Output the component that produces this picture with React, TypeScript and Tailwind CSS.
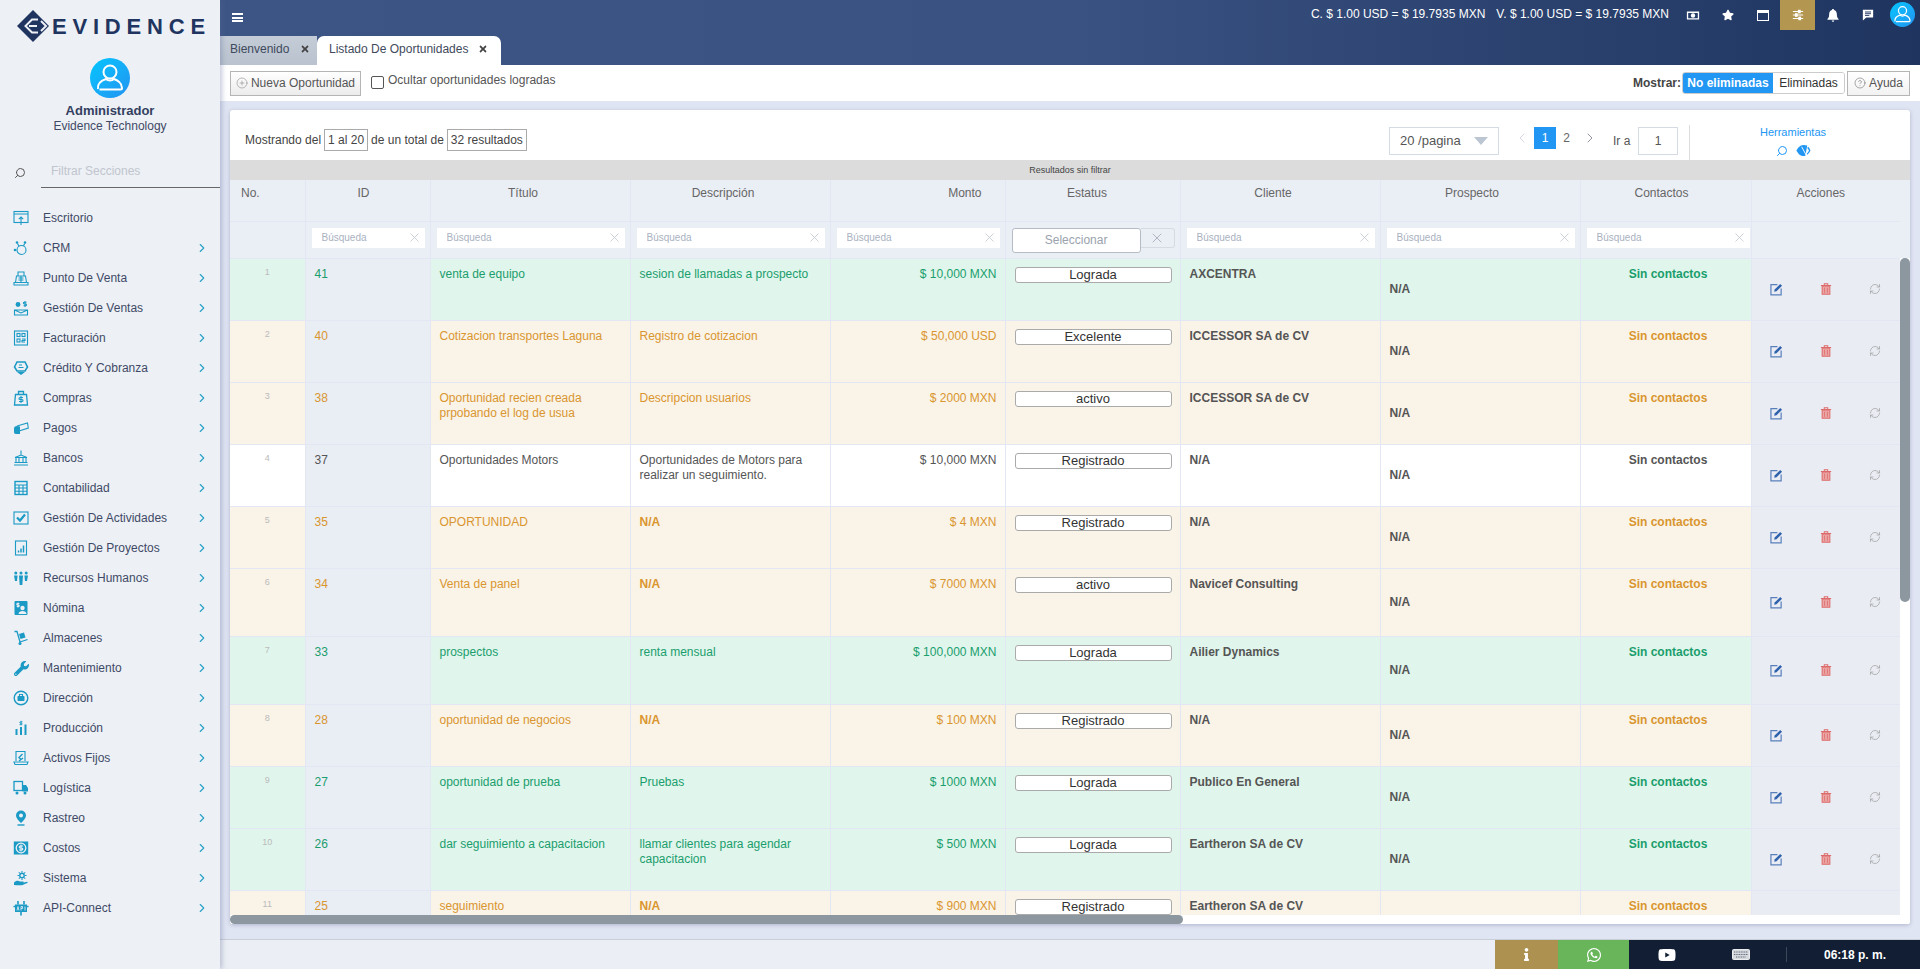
import { ChevronLeft, ChevronRight, CircleHelp, CirclePlus, RefreshCw, Search, X } from "lucide-react";
import type { ReactNode } from "react";
import { FaInfo, FaStar, FaTimes, FaWhatsapp, FaWrench, FaYoutube } from "react-icons/fa";

type Tone = "green" | "orange" | "white";

type Row = {
  no: number;
  id: number;
  title: string;
  desc: string;
  amount: string;
  status: string;
  client: string;
  tone: Tone;
  tall?: boolean;
};

const rows: Row[] = [
  { no: 1, id: 41, title: "venta de equipo", desc: "sesion de llamadas a prospecto", amount: "$ 10,000 MXN", status: "Lograda", client: "AXCENTRA", tone: "green" },
  { no: 2, id: 40, title: "Cotizacion transportes Laguna", desc: "Registro de cotizacion", amount: "$ 50,000 USD", status: "Excelente", client: "ICCESSOR SA de CV", tone: "orange" },
  { no: 3, id: 38, title: "Oportunidad recien creada prpobando el log de usua", desc: "Descripcion usuarios", amount: "$ 2000 MXN", status: "activo", client: "ICCESSOR SA de CV", tone: "orange" },
  { no: 4, id: 37, title: "Oportunidades Motors", desc: "Oportunidades de Motors para realizar un seguimiento.", amount: "$ 10,000 MXN", status: "Registrado", client: "N/A", tone: "white" },
  { no: 5, id: 35, title: "OPORTUNIDAD", desc: "N/A", amount: "$ 4 MXN", status: "Registrado", client: "N/A", tone: "orange" },
  { no: 6, id: 34, title: "Venta de panel", desc: "N/A", amount: "$ 7000 MXN", status: "activo", client: "Navicef Consulting", tone: "orange", tall: true },
  { no: 7, id: 33, title: "prospectos", desc: "renta mensual", amount: "$ 100,000 MXN", status: "Lograda", client: "Ailier Dynamics", tone: "green", tall: true },
  { no: 8, id: 28, title: "oportunidad de negocios", desc: "N/A", amount: "$ 100 MXN", status: "Registrado", client: "N/A", tone: "orange" },
  { no: 9, id: 27, title: "oportunidad de prueba", desc: "Pruebas", amount: "$ 1000 MXN", status: "Lograda", client: "Publico En General", tone: "green" },
  { no: 10, id: 26, title: "dar seguimiento a capacitacion", desc: "llamar clientes para agendar capacitacion", amount: "$ 500 MXN", status: "Lograda", client: "Eartheron SA de CV", tone: "green" },
  { no: 11, id: 25, title: "seguimiento", desc: "N/A", amount: "$ 900 MXN", status: "Registrado", client: "Eartheron SA de CV", tone: "orange" },
];

const toneCell: Record<Tone, string> = {
  green: "bg-[#e0f5ec] text-[#1a9e6c]",
  orange: "bg-[#faf3e8] text-[#d9962f]",
  white: "bg-white text-[#555]",
};

const toneText: Record<Tone, string> = {
  green: "text-[#1a9e6c]",
  orange: "text-[#d9962f]",
  white: "text-[#555]",
};

const Ico = ({ children }: { children: ReactNode }) => (
  <svg viewBox="0 0 16 16" className="w-[16px] h-[16px] text-[#1b9ac5]" fill="none" stroke="currentColor" strokeWidth="1.1">
    {children}
  </svg>
);

const solid = { fill: "currentColor", stroke: "none" };

const menu: { label: string; arrow?: boolean; icon: ReactNode }[] = [
  { label: "Escritorio", icon: <Ico><rect x="1" y="1.5" width="14" height="11" /><path d="M1 4h14M8 15V7M5.8 9.2 8 7l2.2 2.2" /></Ico> },
  { label: "CRM", arrow: true, icon: <Ico><circle cx="8.5" cy="10" r="4.5" /><circle cx="4" cy="2.5" r="1.3" {...solid} /><circle cx="12" cy="2.5" r="1.3" {...solid} /><circle cx="2" cy="10" r="1.3" {...solid} /><path d="M4.5 3.5l1.6 3M11.6 3.5 10.5 6" /></Ico> },
  { label: "Punto De Venta", arrow: true, icon: <Ico><path d="M1 15h14v-2.5H1zM2.5 12.5l1-6.5h9l1 6.5M5 6V2h6v4M5.5 8h5M5.5 10h5M8 6v6" /></Ico> },
  { label: "Gestión De Ventas", arrow: true, icon: <Ico><circle cx="5" cy="4.5" r="2.4" {...solid} /><path d="M1.5 10h13v5h-13zM1.5 10l6.5 3 6.5-3" /><path d="M12 1v6M13.5 2.2h-2.2a.9.9 0 0 0 0 1.8h1.3a.9.9 0 0 1 0 1.8h-2.1" /></Ico> },
  { label: "Facturación", arrow: true, icon: <Ico><rect x="1.5" y="1" width="13" height="14" /><rect x="4" y="3.5" width="3" height="3" /><rect x="9" y="3.5" width="3" height="3" /><rect x="4" y="9" width="3" height="3" /><path d="M9 9h3v1.5H9V12h3" /></Ico> },
  { label: "Crédito Y Cobranza", arrow: true, icon: <Ico><path d="M8 15 4 12h8z" {...solid} /><path d="M1.5 7 4 2h8l2.5 5L12 11H4z" strokeWidth="1.6" /><path d="M5.5 7.5h5M6 5h3" /></Ico> },
  { label: "Compras", arrow: true, icon: <Ico><path d="M2.5 4.5h11L14.5 15h-13zM5.5 4.5V1.5h5v3" strokeWidth="1.3" /><path d="M8 6v7M10 7.5H7a1 1 0 0 0 0 2h2a1 1 0 0 1 0 2H6" /></Ico> },
  { label: "Pagos", arrow: true, icon: <Ico><path d="M4 6 14.5 3l.8 5L6 11" /><path d="M1 8.5C1 7 2 6 4 6l3 .5V14H3c-1.500 0-2-1-2-2z" {...solid} /></Ico> },
  { label: "Bancos", arrow: true, icon: <Ico><path d="M1 15h14M2 7.500h12M3 7.500v5h3v-5M10 7.500v5h3v-5M1.500 12.500h13M2 7.500 8 5l6 2.500M8 .5v4" /></Ico> },
  { label: "Contabilidad", arrow: true, icon: <Ico><rect x="2" y="1.500" width="12" height="13" strokeWidth="1.4" /><path d="M2 5h12M2 8h12M2 11.200h12M6 5v9.500M10 5v9.500" /></Ico> },
  { label: "Gestión De Actividades", arrow: true, icon: <Ico><rect x="1" y="2" width="14" height="12" /><path d="m4 7.500 3 3 5-6" strokeWidth="2.200" /></Ico> },
  { label: "Gestión De Proyectos", arrow: true, icon: <Ico><rect x="2.500" y="1" width="11" height="14" /><path d="M5.500 12.500v-2M8 12.500v-4M10.500 12.500v-7" strokeWidth="1.500" /></Ico> },
  { label: "Recursos Humanos", arrow: true, icon: <Ico><g {...solid}><circle cx="2.800" cy="3" r="1.500" /><circle cx="8" cy="3" r="1.500" /><circle cx="13.200" cy="3" r="1.500" /><path d="M1 5.500h3.600L4 11H2zM6 5.500h4L9.300 15H6.700zM11.400 5.500H15L14 11h-2z" /></g></Ico> },
  { label: "Nómina", arrow: true, icon: <Ico><rect x="1.500" y="1" width="13" height="14" rx="1" {...solid} /><circle cx="9.500" cy="8" r="2.200" fill="#edf0f5" stroke="none" /><path d="M5.500 14c0-2 2-3 4-3s4 1 4 3z" fill="#edf0f5" stroke="none" /><path d="M5 2.500v5M6.300 3.500H4.500a.7.7 0 0 0 0 1.500h1a.7.7 0 0 1 0 1.500H3.700" stroke="#edf0f5" /></Ico> },
  { label: "Almacenes", arrow: true, icon: <Ico><path d="M1.500 1.500H4l3 10.500 7.500-2.500" strokeWidth="1.300" /><circle cx="7" cy="13.500" r="1.500" {...solid} /><path d="m6 4 5-1.500 1.500 5-5 1.500z" {...solid} /></Ico> },
  { label: "Mantenimiento", arrow: true, icon: <FaWrench className="w-[15px] h-[15px] text-[#1b9ac5]" /> },
  { label: "Dirección", arrow: true, icon: <Ico><circle cx="8" cy="8" r="6.800" strokeWidth="1.400" /><rect x="4.500" y="6" width="7" height="5" rx=".8" {...solid} /><path d="M6.500 6V4.500h3V6" /></Ico> },
  { label: "Producción", arrow: true, icon: <Ico><path d="M3.500 15V9M8 15V7M12.500 15V4.500" strokeWidth="2" /><path d="M8 .8v4.500M9.500 1.800H7.500a.7.7 0 0 0 0 1.400h1a.7.7 0 0 1 0 1.400H6.500" strokeWidth=".9" /></Ico> },
  { label: "Activos Fijos", arrow: true, icon: <Ico><path d="M3 11V1.500h9V11M1 12h14l-1 2.500H2z" /><path d="M9.500 4 6 7.500 8 9.500M6 11l4-3" strokeWidth="1.400" /></Ico> },
  { label: "Logística", arrow: true, icon: <Ico><rect x="1" y="1.500" width="8.500" height="9" strokeWidth="1.300" /><path d="M9.500 5H13l2 3v3.500H9.500z" {...solid} /><circle cx="4" cy="13" r="1.500" {...solid} /><circle cx="12" cy="13" r="1.500" {...solid} /></Ico> },
  { label: "Rastreo", arrow: true, icon: <Ico><path d="M8 13C5 10 3 7.800 3 5.500a5 5 0 0 1 10 0C13 7.800 11 10 8 13z" {...solid} /><circle cx="8" cy="5.500" r="2" fill="#edf0f5" stroke="none" /><path d="M4.500 15h7" strokeWidth="1.400" /></Ico> },
  { label: "Costos", arrow: true, icon: <Ico><rect x=".8" y="1.500" width="14.400" height="13" {...solid} /><circle cx="8" cy="8" r="4.800" stroke="#edf0f5" strokeWidth="1.300" /><path d="M8 4.500v7M10 6H7.200a1 1 0 0 0 0 2h1.600a1 1 0 0 1 0 2H6" stroke="#edf0f5" /></Ico> },
  { label: "Sistema", arrow: true, icon: <Ico><path d="M1 12.500c2-2 4-2 6-1h3c1 0 1 1.200 0 1.200l4-1c.8 0 1 .8.300 1.200L9 15.200H3.500L1 15z" {...solid} /><circle cx="9" cy="5.500" r="2.200" strokeWidth="1.400" /><path d="M9 1v1.500M9 8.500V10M4.500 5.500H6M12 5.500h1.500M5.800 2.300l1 1M12.200 2.300l-1 1M5.800 8.700l1-1M12.200 8.700l-1-1" /></Ico> },
  { label: "API-Connect", arrow: true, icon: <Ico><path d="M2 4.500h12V12H2z" {...solid} /><path d="M5 1v3.500M11 1v3.500M8 12v3.500M.5 6.500h15" strokeWidth="1.600" /><path d="M4 10.500 5 6.500l1 4M8 10.500v-4h1.500v2H8M12 6.500v4" stroke="#edf0f5" strokeWidth=".8" /></Ico> },
];

const Avatar = ({ size }: { size: string }) => (
  <div className={`${size} rounded-full bg-gradient-to-br from-[#00c6ff] to-[#2093f0] flex items-center justify-center`}>
    <svg viewBox="0 0 40 40" className="w-full h-full" fill="none" stroke="white" strokeWidth="2">
      <circle cx="20" cy="14" r="6.500" />
      <path d="M8 31c-1-6 5-9 8-10 2 2 6 2 8 0 3 1 8 4 8 9 0 1-1 1.500-1.500 1.500H9.500" />
    </svg>
  </div>
);

const Logo = () => (
  <div className="flex items-center h-[32px] ml-[17px] mt-[10px]">
    <svg viewBox="0 0 32 32" className="w-[32px] h-[32px] text-[#1f3560]" fill="currentColor">
      <path d="M16 0 32 16 16 32 0 16z" />
      <path d="M21 9.500h-6L8.500 16l6.500 6.500h6M12 16h8M24 11l5 5-5 5" fill="none" stroke="#edf0f5" strokeWidth="2" />
    </svg>
    <span className="ml-[3px] text-[22px] font-bold tracking-[5.8px] text-[#1f3560]">EVIDENCE</span>
  </div>
);

const Sidebar = () => (
  <aside className="w-[220px] shrink-0 h-full bg-[#edf0f5] relative z-10 shadow-[2px_0_5px_rgba(90,100,150,0.35)] flex flex-col">
    <Logo />
    <div className="flex flex-col items-center mt-[16px]">
      <Avatar size="w-[40px] h-[40px]" />
      <p className="mt-[4px] text-[13px] leading-[18px] font-bold text-[#33405f]">Administrador</p>
      <p className="-mt-[1px] text-[12px] leading-[15px] text-[#3f4a66]">Evidence Technology</p>
    </div>
    <div className="flex items-center mt-[26px] h-[28px]">
      <Search className="w-[12px] h-[12px] ml-[14px] mb-[3px] text-[#555] -scale-x-100" />
      <div className="ml-[15px] flex-1 h-[28px] border-b border-[#666] pl-[10px] text-[12px] leading-[23px] text-[#c0c5ce]">
        Filtrar Secciones
      </div>
    </div>
    <nav className="mt-[15px]">
      {menu.map((item) => (
        <div key={item.label} className="flex items-center h-[30px] pl-[13px] pr-[11px] text-[12px] text-[#3f4a66]">
          <span className="w-[16px] flex justify-center">{item.icon}</span>
          <span className="ml-[14px] flex-1">{item.label}</span>
          {item.arrow && <ChevronRight className="w-[14px] h-[14px] text-[#2ba3c8]" />}
        </div>
      ))}
    </nav>
  </aside>
);

const TopIcon = ({ children, className = "" }: { children: ReactNode; className?: string }) => (
  <div className={`w-[35px] h-[30px] flex items-center justify-center text-white ${className}`}>{children}</div>
);

const TopBar = () => (
  <header className="h-[65px] shrink-0 bg-gradient-to-r from-[#3d5585] via-[#3a5282] to-[#1f3560]">
    <div className="flex items-start h-[36px] pl-[12px] pr-[5px]">
      <div className="mt-[13px] w-[11px] h-[9px] border-y-2 border-white relative">
        <div className="absolute left-0 right-0 top-[1.5px] h-[2px] bg-white" />
      </div>
      <span className="ml-auto mt-[7px] text-[12px] leading-[15px] text-white">C. $ 1.00 USD = $ 19.7935 MXN</span>
      <span className="ml-[11px] mr-[6px] mt-[7px] text-[12px] leading-[15px] text-white">V. $ 1.00 USD = $ 19.7935 MXN</span>
      <TopIcon>
        <svg viewBox="0 0 16 12" className="w-[14px] h-[11px]" fill="currentColor">
          <path fillRule="evenodd" d="M1 1.500h14v9H1zM2.500 3v6h11V3z" />
          <circle cx="8" cy="6" r="2.500" />
        </svg>
      </TopIcon>
      <TopIcon><FaStar className="w-[12px] h-[12px]" /></TopIcon>
      <TopIcon>
        <div className="w-[12px] h-[11px] border border-white border-t-[3px]" />
      </TopIcon>
      <TopIcon className="bg-[#b3964f]">
        <svg viewBox="0 0 14 14" className="w-[12px] h-[12px]" stroke="currentColor" strokeWidth="1.200" fill="white">
          <path d="M1 3h12M1 7h12M1 11h12" />
          <rect x="7.500" y="1.500" width="2" height="3" />
          <rect x="4" y="5.500" width="2" height="3" />
          <rect x="8" y="9.500" width="2" height="3" />
        </svg>
      </TopIcon>
      <TopIcon>
        <svg viewBox="0 0 14 15" className="w-[12px] h-[13px]" fill="currentColor">
          <path d="M7 0c.8 0 1.200.5 1.200 1.200C10.300 1.800 11.500 3.500 11.500 6c0 3 .8 4.300 2 5.500v1H.5v-1c1.200-1.200 2-2.500 2-5.500 0-2.500 1.200-4.200 3.300-4.800C5.800.5 6.200 0 7 0zM5.500 13.200h3a1.500 1.500 0 0 1-3 0z" />
        </svg>
      </TopIcon>
      <TopIcon>
        <svg viewBox="0 0 14 14" className="w-[12px] h-[12px]">
          <path fill="white" d="M1 1h12v9H5l-4 3.500z" />
          <path stroke="#253a66" strokeWidth="1.100" d="M3.500 3.500h7M3.500 5.500h7M3.500 7.500h5" />
        </svg>
      </TopIcon>
      <div className="ml-[5px] mt-[2px]"><Avatar size="w-[25px] h-[25px]" /></div>
    </div>
    <div className="flex items-end h-[29px] text-[12px]">
      <div className="w-[97px] h-[29px] flex items-center pl-[10px] pb-[3px] bg-gradient-to-b from-[#c4ccd7] to-[#b9c2ce] text-[#3f4a5c]">
        Bienvenido
        <FaTimes className="ml-[11px] w-[10px] h-[10px] text-[#444]" />
      </div>
      <div className="w-[184px] h-[29px] flex items-center pl-[12px] pb-[3px] bg-white rounded-t-[7px] text-[#3f4a5c]">
        Listado De Oportunidades
        <FaTimes className="ml-[10px] w-[10px] h-[10px] text-[#444]" />
      </div>
    </div>
  </header>
);

const Toolbar = () => (
  <div className="h-[36px] shrink-0 bg-white flex items-center pl-[10px] pr-[10px] text-[12px] text-[#555]">
    <button type="button" className="w-[131px] h-[25px] flex items-center justify-center gap-[3px] border border-[#b5b5b5] bg-gradient-to-b from-white to-[#ececec] text-[#555]">
      <CirclePlus className="w-[12px] h-[12px] text-[#777]" strokeWidth={1} />
      Nueva Oportunidad
    </button>
    <span className="ml-[10px] mb-[1px] w-[13px] h-[13px] border border-[#555] rounded-[2px]" />
    <span className="ml-[4px] mb-[6px]">Ocultar oportunidades logradas</span>
    <span className="ml-auto font-bold text-[#444]">Mostrar:</span>
    <div className="flex h-[22px] ml-[1px] border border-[#ccc] rounded-[3px] overflow-hidden">
      <span className="w-[90px] bg-[#2196f3] text-white font-bold flex items-center justify-center">No eliminadas</span>
      <span className="w-[71px] bg-white text-[#333] flex items-center justify-center">Eliminadas</span>
    </div>
    <button type="button" className="ml-[2px] w-[63px] h-[25px] flex items-center justify-center gap-[3px] border border-[#b5b5b5] bg-gradient-to-b from-white to-[#f2f2f2] text-[#555]">
      <CircleHelp className="w-[12px] h-[12px]" strokeWidth={1} />
      Ayuda
    </button>
  </div>
);

const CardHeader = () => (
  <div className="h-[50px] flex items-start text-[12px] text-[#444]">
    <div className="flex items-center gap-[3px] ml-[15px] mt-[19px] h-[22px]">
      <span>Mostrando del</span>
      <span className="h-[22px] px-[3px] flex items-center border border-[#aaa]">1 al 20</span>
      <span>de un total de</span>
      <span className="h-[22px] px-[3px] flex items-center border border-[#aaa]">32 resultados</span>
    </div>
    <div className="ml-auto mt-[17px] w-[110px] h-[28px] border border-[#d5dbe3] flex items-center justify-between pl-[10px] pr-[10px] text-[13px] text-[#555]">
      20 /pagina
      <span className="w-0 h-0 border-x-[7px] border-x-transparent border-t-[8px] border-t-[#bcc6d3]" />
    </div>
    <ChevronLeft className="ml-[15px] mt-[20px] w-[16px] h-[16px] text-[#ccd]" strokeWidth={1.200} />
    <span className="ml-[4px] mt-[17px] w-[22px] h-[22px] bg-[#2196f3] text-white flex items-center justify-center">1</span>
    <span className="w-[21px] mt-[17px] h-[22px] flex items-center justify-center text-[#666]">2</span>
    <ChevronRight className="ml-[5px] mt-[20px] w-[16px] h-[16px] text-[#778]" strokeWidth={1.200} />
    <span className="ml-[15px] mt-[22px] w-[25px] text-[#555]">Ir a</span>
    <span className="mt-[17px] w-[40px] h-[28px] border border-[#d5dbe3] flex items-center justify-center text-[#555]">1</span>
    <div className="ml-[11px] mt-[15px] w-[221px] h-[35px] border-l border-[#ddd] flex flex-col items-center pr-[14px]">
      <span className="text-[11px] leading-[14px] text-[#2196f3]">Herramientas</span>
      <div className="flex items-center gap-[8px] mt-[5px]">
        <Search className="w-[12px] h-[12px] text-[#2196f3] -scale-x-100" strokeWidth={2} />
        <svg viewBox="0 0 16 14" className="w-[15px] h-[13px] text-[#2196f3]" fill="currentColor">
          <path d="M8 1C4 1 1.500 4.500.5 7 1.500 9.500 4 13 8 13c1 0 1.500-.2 2-.4L12 1.500C11 1.200 9.500 1 8 1z" />
          <path d="M13 3c1.200 1 2 2.500 2.500 4-.5 1.500-2 3.500-3.500 4.500l-.6-1c1.200-1 2-2.200 2.500-3.500-.4-1-1.100-2-1.900-2.800z" />
          <path d="M6 3 11.500 13" stroke="white" strokeWidth="1" />
        </svg>
      </div>
    </div>
  </div>
);

const cols = ["w-[75px]", "w-[125px]", "w-[200px]", "w-[200px]", "w-[175px]", "w-[175px]", "w-[200px]", "w-[200px]", "w-[171px]", "w-[149px]", "w-[10px]"];

const FilterInput = ({ pr = "pr-[5px]" }: { pr?: string }) => (
  <td className={`pl-[6px] ${pr} align-top pt-[6px] border-r border-b border-[#e3e7f3]`}>
    <div className="h-[20px] bg-white flex items-center pl-[10px] pr-[3px]">
      <input placeholder="Búsqueda" className="flex-1 min-w-0 text-[10px] outline-none placeholder:text-[#aab2bf]" />
      <X className="w-[15px] h-[15px] text-[#c3c9d2]" strokeWidth={1.300} />
    </div>
  </td>
);

const EditIcon = () => (
  <svg viewBox="0 0 14 14" className="w-[13px] h-[13px]" fill="none">
    <path d="M8 1.800H1v11h11V6" stroke="#5a80bb" strokeWidth="1.300" />
    <path d="M4.500 9.500 5 7l6-6 2 2-6 6z" fill="#2f62ad" />
  </svg>
);

const TrashIcon = () => (
  <svg viewBox="0 0 14 14" className="w-[12px] h-[14px]" fill="none" stroke="#dd6a6a">
    <path d="M1 3h12M5 3V1h4v2" strokeWidth="1.200" />
    <path d="M2.500 3.500h9V13h-9z" fill="#eba5a5" strokeWidth="1.200" />
    <path d="M5.300 5.500v6M8.700 5.500v6" strokeWidth=".9" />
  </svg>
);

const tdBase = "border-r border-b border-[#e3e7f3] align-top pt-[8px] px-[9px] leading-[15px]";

const TableRow = ({ row }: { row: Row }) => (
  <tr className={row.tall ? "h-[68px]" : "h-[62px]"}>
    <td className={`border-r border-b border-[#e3e7f3] align-top pt-[6px] leading-[15px] ${toneCell[row.tone]} !text-[#bbb] text-center text-[9px]`}>{row.no}</td>
    <td className={`${tdBase} bg-[#e9edf4] ${toneText[row.tone]}`}>{row.id}</td>
    <td className={`${tdBase} ${toneCell[row.tone]}`}>{row.title}</td>
    <td className={`${tdBase} ${toneCell[row.tone]} ${row.desc === "N/A" ? "font-bold" : ""}`}>{row.desc}</td>
    <td className={`border-r border-b border-[#e3e7f3] align-top pt-[8px] pl-[9px] pr-[8px] leading-[15px] ${toneCell[row.tone]} text-right`}>{row.amount}</td>
    <td className={`${tdBase} ${toneCell[row.tone]}`}>
      <div className="h-[16px] w-[157px] border border-[#aaa] rounded-[3px] bg-white text-[13px] text-[#333] flex items-center justify-center">{row.status}</div>
    </td>
    <td className={`${tdBase} ${toneCell[row.tone]} !text-[#555] font-bold`}>{row.client}</td>
    <td className={`border-r border-b border-[#e3e7f3] px-[9px] align-middle font-bold ${toneCell[row.tone]} !text-[#555]`}>N/A</td>
    <td className={`border-r border-b border-[#e3e7f3] align-top pt-[8px] pl-[13px] pr-[8px] leading-[15px] ${toneCell[row.tone]} font-bold text-center`}>Sin contactos</td>
    <td className="bg-[#e9ecf3] border-b border-[#e3e7f3] align-middle">
      <div className="grid grid-cols-3 justify-items-center items-center">
        <EditIcon />
        <TrashIcon />
        <RefreshCw className="w-[12px] h-[12px] text-[#999]" strokeWidth={1.300} />
      </div>
    </td>
    <td className="bg-white" />
  </tr>
);

const DataTable = () => (
  <div className="relative h-[764px] overflow-hidden rounded-b-[3px]">
    <div className="h-[20px] bg-[#dcdcdc] text-center text-[9px] leading-[20px] text-[#444]">Resultados sin filtrar</div>
    <table className="table-fixed w-[1680px] border-collapse text-[12px]">
      <colgroup>
        {cols.map((c, i) => (
          <col key={i} className={c} />
        ))}
      </colgroup>
      <thead className="bg-[#eaeef5] text-[#666] font-normal">
        <tr className="h-[41px]">
          <th className="font-normal align-top pt-[4px] text-left pl-[11px] border-r border-b border-[#e3e7f3]">No.</th>
          <th className="font-normal align-top pt-[4px] pr-[8px] border-r border-b border-[#e3e7f3]">ID</th>
          <th className="font-normal align-top pt-[4px] pr-[14px] border-r border-b border-[#e3e7f3]">Título</th>
          <th className="font-normal align-top pt-[4px] pr-[14px] border-r border-b border-[#e3e7f3]">Descripción</th>
          <th className="font-normal align-top pt-[4px] pr-[23px] text-right border-r border-b border-[#e3e7f3]">Monto</th>
          <th className="font-normal align-top pt-[4px] pr-[11px] border-r border-b border-[#e3e7f3]">Estatus</th>
          <th className="font-normal align-top pt-[4px] pr-[14px] border-r border-b border-[#e3e7f3]">Cliente</th>
          <th className="font-normal align-top pt-[4px] pr-[16px] border-r border-b border-[#e3e7f3]">Prospecto</th>
          <th className="font-normal align-top pt-[4px] pr-[8px] border-r border-b border-[#e3e7f3]">Contactos</th>
          <th className="font-normal align-top pt-[4px] pr-[10px] border-b border-[#e3e7f3]">Acciones</th>
          <th />
        </tr>
        <tr className="h-[37px]">
          <td className="border-r border-b border-[#e3e7f3]" />
          <FilterInput />
          <FilterInput />
          <FilterInput />
          <FilterInput />
          <td className="pl-[6px] pr-[5px] align-top pt-[6px] border-r border-b border-[#e3e7f3]">
            <div className="flex items-start">
              <div className="w-[130px] h-[25px] bg-white border border-[#b5bcc6] rounded-[3px] flex items-center justify-center text-[#9aa3ad]">Seleccionar</div>
              <div className="w-[34px] h-[20px] border border-l-0 border-[#d5dbe3] rounded-r-[3px] flex items-center justify-center">
                <X className="w-[16px] h-[16px] text-[#a5adb8]" strokeWidth={1.300} />
              </div>
            </div>
          </td>
          <FilterInput />
          <FilterInput />
          <FilterInput pr="pr-[1px]" />
          <td className="border-b border-[#e3e7f3]" />
          <td />
        </tr>
      </thead>
      <tbody>
        {rows.map((row) => (
          <TableRow key={row.no} row={row} />
        ))}
      </tbody>
    </table>
    <div className="absolute right-0 top-[98px] w-[10px] h-[344px] rounded-[5px] bg-[#8c979f]" />
    <div className="absolute left-0 right-0 bottom-0 h-[9px] bg-white">
      <div className="w-[953px] h-[9px] rounded-[5px] bg-[#8c979f]" />
    </div>
  </div>
);

const Footer = () => (
  <footer className="h-[30px] shrink-0 bg-[#ebeef4] border-t border-[#c9cdd8] flex justify-end text-white">
    <div className="w-[63px] bg-[#ad9150] flex items-center justify-center"><FaInfo className="w-[13px] h-[13px]" /></div>
    <div className="w-[71px] bg-[#68b55a] flex items-center justify-center"><FaWhatsapp className="w-[16px] h-[16px]" /></div>
    <div className="w-[291px] bg-[#111e33] flex items-center">
      <FaYoutube className="ml-[29px] w-[18px] h-[18px]" />
      <svg viewBox="0 0 18 11" className="ml-[56px] w-[18px] h-[11px]" fill="none">
        <rect x=".5" y=".5" width="17" height="10" rx="1" fill="#d5d8dd" stroke="#e9ebee" />
        <path d="M2 3h14M2 5.500h14M4 8h10" stroke="#5c6675" strokeWidth="1" strokeDasharray="1 .7" />
      </svg>
      <span className="ml-[36px] w-px h-[15px] bg-[#3c4759]" />
      <span className="ml-[37px] text-[12px] font-bold">06:18 p. m.</span>
    </div>
  </footer>
);

const App = () => (
  <div className="flex h-screen w-full overflow-hidden font-['Liberation_Sans',sans-serif]">
    <Sidebar />
    <div className="flex-1 min-w-0 flex flex-col">
      <TopBar />
      <Toolbar />
      <main className="flex-1 min-h-0 bg-[#e0e5f3] pl-[10px] pr-[10px] pt-[9px]">
        <div className="h-[814px] bg-white rounded-[3px] shadow-[0_1px_4px_rgba(60,70,110,0.3)]">
          <CardHeader />
          <DataTable />
        </div>
      </main>
      <Footer />
    </div>
  </div>
);

export default App;
